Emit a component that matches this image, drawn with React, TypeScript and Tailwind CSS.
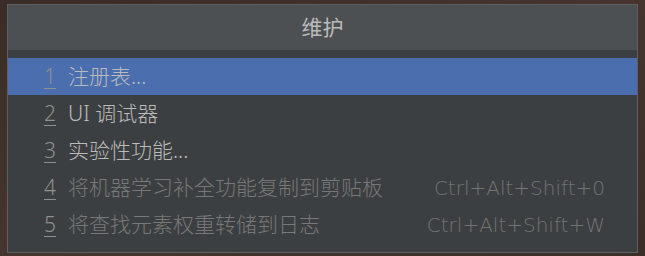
const items = [
  { n: "1", label: "注册表...", shortcut: "", selected: true, enabled: true },
  { n: "2", label: "UI 调试器", shortcut: "", selected: false, enabled: true },
  { n: "3", label: "实验性功能...", shortcut: "", selected: false, enabled: true },
  { n: "4", label: "将机器学习补全功能复制到剪贴板", shortcut: "Ctrl+Alt+Shift+0", selected: false, enabled: false },
  { n: "5", label: "将查找元素权重转储到日志", shortcut: "Ctrl+Alt+Shift+W", selected: false, enabled: false },
];

export default function App() {
  return (
    <div
      className="w-[645px] h-[256px] overflow-hidden bg-gradient-to-br from-[#3a2c26] via-[#45352e] to-[#3b2e29] pt-[4px] pl-[7px]"
      style={{ fontFamily: '"Noto Sans", "Noto Sans CJK SC", sans-serif' }}
    >
      <div className="w-[631px] h-[249px] border border-[#5e5f60] bg-[#3c3f41] flex flex-col">
        <div className="h-[45px] shrink-0 bg-[#4c5052] flex items-center justify-center text-[21px] text-[#bbbbbb]">
          维护
        </div>
        <div className="pt-[8px] flex flex-col">
          {items.map((it) => (
            <div
              key={it.n}
              className={
                "h-[37px] flex items-center pl-[36px] pr-[32px] text-[21px] font-light " +
                (it.selected ? "bg-[#4b6eaf] " : "") +
                (it.enabled ? "text-[#bbbbbb]" : "text-[#787878]")
              }
            >
              <span className="w-[24px] underline underline-offset-[4px] decoration-1 text-[#8f8f8f]">
                {it.n}
              </span>
              <span className="flex-1">{it.label}</span>
              {it.shortcut && (
                <span
                  className="text-[20px] text-[#737373]"
                  style={{ fontFamily: '"DejaVu Sans", sans-serif' }}
                >
                  {it.shortcut}
                </span>
              )}
            </div>
          ))}
        </div>
      </div>
    </div>
  );
}
